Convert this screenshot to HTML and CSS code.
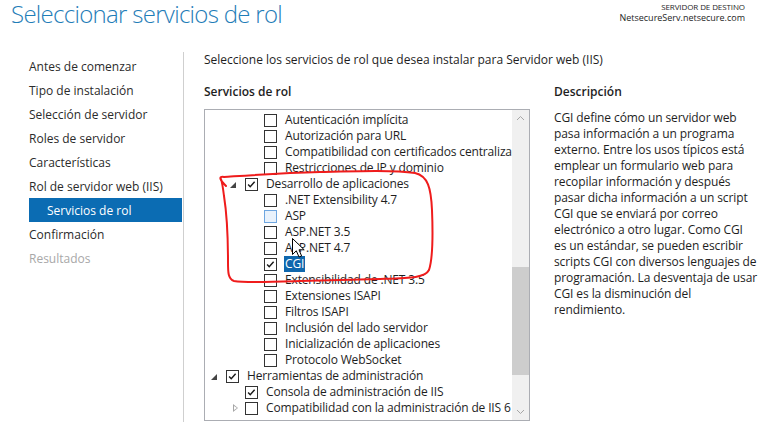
FILE: index.html
```html
<!DOCTYPE html>
<html lang="es">
<head>
<meta charset="utf-8">
<title>Seleccionar servicios de rol</title>
<link rel="stylesheet" href="styles.css">
</head>
<body>
<div class="page">
  <header class="header">
    <h1 class="title">Seleccionar servicios de rol</h1>
    <div class="dest">
      <div class="dest-label">SERVIDOR DE DESTINO</div>
      <div class="dest-name">NetsecureServ.netsecure.com</div>
    </div>
  </header>
  <div class="main">
    <nav class="nav">
      <div class="nav-item">Antes de comenzar</div>
      <div class="nav-item">Tipo de instalación</div>
      <div class="nav-item">Selección de servidor</div>
      <div class="nav-item">Roles de servidor</div>
      <div class="nav-item">Características</div>
      <div class="nav-item">Rol de servidor web (IIS)</div>
      <div class="nav-item nav-sub nav-active">Servicios de rol</div>
      <div class="nav-item">Confirmación</div>
      <div class="nav-item nav-disabled">Resultados</div>
    </nav>
    <section class="content">
      <p class="intro">Seleccione los servicios de rol que desea instalar para Servidor web (IIS)</p>
      <div class="columns">
        <div class="roles">
          <h2 class="heading">Servicios de rol</h2>
          <div class="listbox">
            <div class="tree">
              <div class="row lv2"><span class="cb"></span><span class="lbl">Autenticación implícita</span></div>
              <div class="row lv2"><span class="cb"></span><span class="lbl">Autorización para URL</span></div>
              <div class="row lv2"><span class="cb"></span><span class="lbl">Compatibilidad con certificados centralizados SSL</span></div>
              <div class="row lv2"><span class="cb"></span><span class="lbl">Restricciones de IP y dominio</span></div>
              <div class="row lv1"><span class="exp"><span class="tri-open"></span></span><span class="cb checked"><svg viewBox="0 0 13 13"><path d="M2.5 6.5 L5 9.2 L10.2 3.2"/></svg></span><span class="lbl">Desarrollo de aplicaciones</span></div>
              <div class="row lv2"><span class="cb"></span><span class="lbl">.NET Extensibility 4.7</span></div>
              <div class="row lv2"><span class="cb hover"></span><span class="lbl">ASP</span></div>
              <div class="row lv2"><span class="cb"></span><span class="lbl">ASP.NET 3.5</span></div>
              <div class="row lv2"><span class="cb"></span><span class="lbl">ASP.NET 4.7</span></div>
              <div class="row lv2"><span class="cb checked"><svg viewBox="0 0 13 13"><path d="M2.5 6.5 L5 9.2 L10.2 3.2"/></svg></span><span class="lbl sel">CGI</span></div>
              <div class="row lv2"><span class="cb"></span><span class="lbl">Extensibilidad de .NET 3.5</span></div>
              <div class="row lv2"><span class="cb"></span><span class="lbl">Extensiones ISAPI</span></div>
              <div class="row lv2"><span class="cb"></span><span class="lbl">Filtros ISAPI</span></div>
              <div class="row lv2"><span class="cb"></span><span class="lbl">Inclusión del lado servidor</span></div>
              <div class="row lv2"><span class="cb"></span><span class="lbl">Inicialización de aplicaciones</span></div>
              <div class="row lv2"><span class="cb"></span><span class="lbl">Protocolo WebSocket</span></div>
              <div class="row lv0"><span class="exp"><span class="tri-open"></span></span><span class="cb checked"><svg viewBox="0 0 13 13"><path d="M2.5 6.5 L5 9.2 L10.2 3.2"/></svg></span><span class="lbl">Herramientas de administración</span></div>
              <div class="row lv1 noexp"><span class="cb checked"><svg viewBox="0 0 13 13"><path d="M2.5 6.5 L5 9.2 L10.2 3.2"/></svg></span><span class="lbl">Consola de administración de IIS</span></div>
              <div class="row lv1"><span class="exp"><span class="tri-closed"></span></span><span class="cb"></span><span class="lbl">Compatibilidad con la administración de IIS 6</span></div>
            </div>
            <div class="scrollbar">
              <div class="sb-btn"><svg viewBox="0 0 17 17"><path d="M5 10 L8.5 6.5 L12 10"/></svg></div>
              <div class="sb-track"><div class="sb-thumb"></div></div>
              <div class="sb-btn"><svg viewBox="0 0 17 17"><path d="M5 7 L8.5 10.5 L12 7"/></svg></div>
            </div>
          </div>
        </div>
        <div class="desc">
          <h2 class="heading">Descripción</h2>
          <p class="desc-text">CGI define cómo un servidor web<br>pasa información a un programa<br>externo. Entre los usos típicos está<br>emplear un formulario web para<br>recopilar información y después<br>pasar dicha información a un script<br>CGI que se enviará por correo<br>electrónico a otro lugar. Como CGI<br>es un estándar, se pueden escribir<br>scripts CGI con diversos lenguajes de<br>programación. La desventaja de usar<br>CGI es la disminución del<br>rendimiento.</p>
        </div>
      </div>
    </section>
  </div>
  <svg class="overlay" viewBox="0 0 761 422" width="761" height="422">
    <path class="annot" d="M226 186 C220 180 218 176 224 177 C240 176 280 173 320 172 C360 171 395 170 415 173 C428 176 431 188 432 210 C433 235 433 258 429 270 C425 278 410 278 380 279 L300 281 C270 282 245 283 234 281 C228 279 228 272 228 262 C228 240 227 215 224 196 C223 188 222 182 221 179"/>
    <path class="cursor" d="M292.5 238.5 L292.5 254.5 L296.3 250.8 L299 257 L301.6 256 L299 249.8 L304.2 249.8 Z"/>
  </svg>
</div>
</body>
</html>
```

FILE: styles.css
```css
* {
  box-sizing: border-box;
}

html, body {
  margin: 0;
  padding: 0;
  background: #ffffff;
}

body {
  font-family: "Open Sans", "Noto Sans", "Liberation Sans", sans-serif;
  font-size: 12px;
  color: #1e1e1e;
}

.page {
  position: relative;
  width: 761px;
  height: 422px;
  overflow: hidden;
}

.header {
  height: 52px;
  display: flex;
  justify-content: space-between;
  align-items: flex-start;
}

.title {
  margin: 0;
  padding-left: 11px;
  font-size: 24px;
  font-weight: 300;
  line-height: 28px;
  color: #1f7db8;
  letter-spacing: -0.7px;
}

.dest {
  padding-right: 16px;
  padding-top: 1px;
  text-align: right;
  line-height: 11px;
  color: #1e1e1e;
}

.dest-label {
  font-size: 8px;
  letter-spacing: -0.1px;
}

.dest-name {
  font-size: 9px;
}

.main {
  display: flex;
  height: 370px;
}

.nav {
  width: 184px;
  flex: none;
  border-right: 1px solid #cfcfcf;
  padding: 2px 1px 0 29px;
  display: flex;
  flex-direction: column;
}

.nav-item {
  height: 24px;
  line-height: 25px;
  color: #2b2b2b;
  white-space: nowrap;
}

.nav-sub {
  padding-left: 18px;
}

.nav-active {
  background: #0b6cb3;
  color: #ffffff;
}

.nav-disabled {
  color: #a8a8a8;
}

.content {
  flex: 1;
  padding-left: 20px;
}

.intro {
  margin: 0;
  line-height: 16px;
}

.columns {
  display: flex;
  gap: 24px;
  margin-top: 16px;
}

.heading {
  margin: 0;
  font-size: 12px;
  font-weight: 600;
  line-height: 16px;
}

.roles .heading {
  margin-bottom: 9px;
}

.listbox {
  width: 326px;
  height: 312px;
  border: 1px solid #abadb3;
  display: flex;
  background: #ffffff;
}

.tree {
  flex: 1;
  overflow: hidden;
  padding-top: 2px;
  white-space: nowrap;
  letter-spacing: -0.15px;
}

.row {
  height: 16px;
  display: flex;
  align-items: center;
}

.lv0 { padding-left: 0; }
.lv1 { padding-left: 19px; }
.lv2 { padding-left: 59px; }
.lv1.noexp { padding-left: 40px; }

.exp {
  width: 21px;
  height: 16px;
  flex: none;
  display: flex;
  align-items: center;
  padding-left: 6px;
}

.tri-open {
  width: 0;
  height: 0;
  border-left: 6px solid transparent;
  border-bottom: 6px solid #444444;
  margin-top: 2px;
}

.tri-closed {
  width: 0;
  height: 0;
  border-top: 4px solid transparent;
  border-bottom: 4px solid transparent;
  border-left: 5px solid #a6a6a6;
  position: relative;
  margin-left: 3px;
}

.tri-closed::after {
  content: "";
  position: absolute;
  left: -4px;
  top: -2.5px;
  border-top: 2.5px solid transparent;
  border-bottom: 2.5px solid transparent;
  border-left: 3px solid #ffffff;
}

.cb {
  width: 13px;
  height: 13px;
  flex: none;
  border: 1px solid #333333;
  background: #ffffff;
  margin-right: 8px;
  display: flex;
}

.cb svg {
  width: 11px;
  height: 11px;
}

.cb path {
  fill: none;
  stroke: #1a1a1a;
  stroke-width: 1.7;
}

.cb.hover {
  border-color: #6ea6e0;
  background: #e9f2fc;
}

.lbl {
  line-height: 16px;
  color: #1e1e1e;
}

.lbl.sel {
  background: #0f67ad;
  color: #ffffff;
  padding: 0 1px;
  margin-left: -1px;
}

.scrollbar {
  width: 17px;
  flex: none;
  background: #f0f0f0;
  display: flex;
  flex-direction: column;
}

.sb-btn {
  height: 17px;
  flex: none;
}

.sb-btn svg {
  width: 17px;
  height: 17px;
  display: block;
}

.sb-btn path {
  fill: none;
  stroke: #a6a6a6;
  stroke-width: 1;
}

.sb-track {
  flex: 1;
}

.sb-thumb {
  margin-top: 140px;
  height: 108px;
  background: #cdcdcd;
}

.desc {
  width: 207px;
}

.desc .heading {
  margin-bottom: 10px;
}

.desc-text {
  margin: 0;
  line-height: 16px;
  white-space: nowrap;
  letter-spacing: -0.1px;
  color: #1e1e1e;
}

.overlay {
  position: absolute;
  left: 0;
  top: 0;
  pointer-events: none;
}

.annot {
  fill: none;
  stroke: #ef1c1c;
  stroke-width: 2;
  stroke-linecap: round;
  stroke-linejoin: round;
}

.cursor {
  fill: #ffffff;
  stroke: #000000;
  stroke-width: 1;
  stroke-linejoin: miter;
}
```
